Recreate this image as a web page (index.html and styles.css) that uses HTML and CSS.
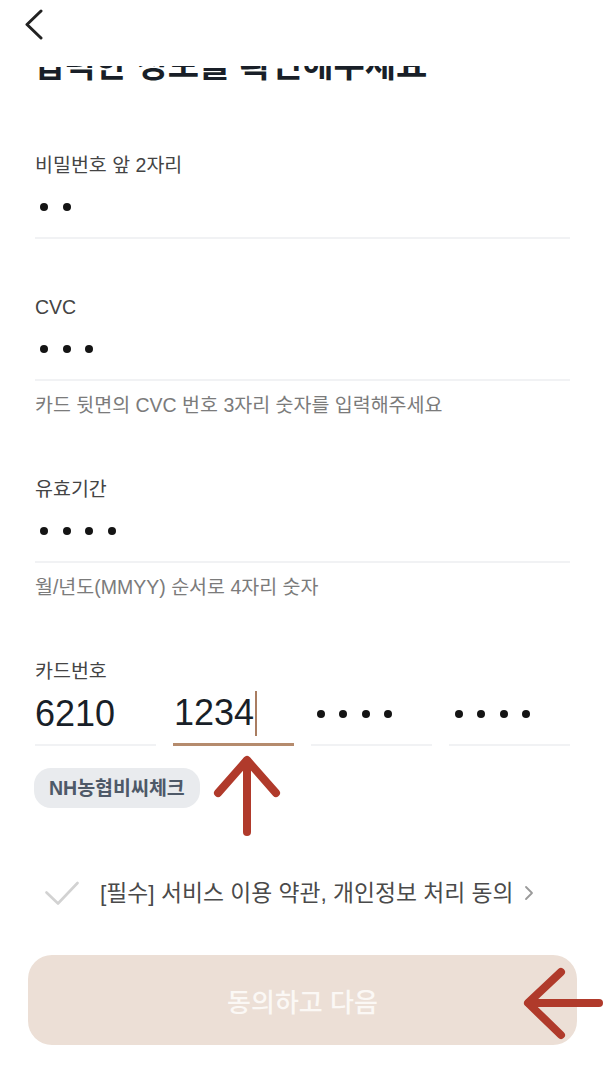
FILE: index.html
```html
<!DOCTYPE html>
<html lang="ko">
<head>
<meta charset="utf-8">
<title>카드 정보 확인</title>
<link rel="stylesheet" href="styles.css">
</head>
<body>
<div class="page">
  <header class="topbar">
    <button class="back" type="button" aria-label="뒤로">
      <svg width="20" height="32" viewBox="0 0 20 32"><polyline points="17,3 3,16.5 17,30" fill="none" stroke="#222" stroke-width="3" stroke-linecap="round" stroke-linejoin="round"/></svg>
    </button>
  </header>
  <div class="title-clip"><h1 class="title">입력한 정보를 확인해주세요</h1></div>

  <div class="form">
    <div class="field f1">
      <div class="label">비밀번호 앞 2자리</div>
      <div class="input"><span class="dots"><i></i><i></i></span></div>
    </div>

    <div class="field f2">
      <div class="label">CVC</div>
      <div class="input"><span class="dots"><i></i><i></i><i></i></span></div>
      <div class="helper">카드 뒷면의 CVC 번호 3자리 숫자를 입력해주세요</div>
    </div>

    <div class="field f3">
      <div class="label">유효기간</div>
      <div class="input"><span class="dots"><i></i><i></i><i></i><i></i></span></div>
      <div class="helper">월/년도(MMYY) 순서로 4자리 숫자</div>
    </div>

    <div class="field f4">
      <div class="label">카드번호</div>
      <div class="card-row">
        <div class="cell"><span class="num">6210</span></div>
        <div class="cell active"><span class="num">1234</span><span class="caret"></span></div>
        <div class="cell"><span class="dots card"><i></i><i></i><i></i><i></i></span></div>
        <div class="cell"><span class="dots card"><i></i><i></i><i></i><i></i></span></div>
      </div>
    </div>

    <div class="chip">NH농협비씨체크</div>

    <div class="agree">
      <svg class="check" width="34" height="26" viewBox="0 0 34 26"><polyline points="1.5,12.5 13,23.5 32.5,3" fill="none" stroke="#d2d2d2" stroke-width="2.6" stroke-linecap="round" stroke-linejoin="round"/></svg>
      <span class="agree-text">[필수] 서비스 이용 약관, 개인정보 처리 동의</span>
      <svg class="more" width="10" height="16" viewBox="0 0 10 16"><polyline points="2,2 8,8 2,14" fill="none" stroke="#9a9a9a" stroke-width="1.8" stroke-linecap="round" stroke-linejoin="round"/></svg>
    </div>
  </div>

  <div class="footer">
    <button class="next" type="button">동의하고 다음</button>
  </div>

  <svg class="mark mark-up" width="76" height="90" viewBox="0 0 76 90"><g fill="none" stroke="#b03a2b" stroke-width="8" stroke-linecap="round" stroke-linejoin="round"><polyline points="8,41 37,8 66,41"/><line x1="37" y1="9" x2="37" y2="80"/></g></svg>
  <svg class="mark mark-left" width="90" height="84" viewBox="0 0 90 84"><g fill="none" stroke="#b03a2b" stroke-width="8" stroke-linecap="round" stroke-linejoin="round"><polyline points="43,10 10,41 43,73"/><line x1="11" y1="41" x2="81" y2="41"/></g></svg>
</div>
</body>
</html>
```

FILE: styles.css
```css
* { box-sizing: border-box; }

html, body {
  margin: 0;
  padding: 0;
  background: #ffffff;
}

body {
  font-family: "Liberation Sans", "Noto Sans CJK KR", sans-serif;
  color: #191f28;
}

.page {
  position: relative;
  width: 608px;
  height: 1070px;
  overflow: hidden;
}

.topbar {
  height: 66px;
  padding: 8px 0 0 24px;
}

.back {
  display: block;
  border: 0;
  background: none;
  padding: 0;
  margin: 0;
  width: 20px;
  height: 32px;
}

.back svg { display: block; }

.title-clip {
  height: 20px;
  overflow: hidden;
  padding-left: 33px;
}

.title {
  margin: -20px 0 0 0;
  font-family: "Noto Sans CJK KR", sans-serif;
  font-size: 34px;
  line-height: 34px;
  font-weight: 700;
  color: #191f28;
  white-space: nowrap;
}

.form {
  padding: 0 38px 0 35px;
}

.field { display: flex; flex-direction: column; }
.f1 { margin-top: 67px; }
.f2 { margin-top: 56px; }
.f3 { margin-top: 62px; }
.f4 { margin-top: 62px; }

.label {
  font-size: 19.5px;
  line-height: 24px;
  height: 24px;
  color: #444444;
}

.input {
  height: 62px;
  display: flex;
  align-items: center;
  border-bottom: 2px solid #f1f2f4;
}

.dots {
  display: flex;
  gap: 14.5px;
  padding-left: 5px;
}

.dots i {
  display: block;
  width: 8px;
  height: 8px;
  border-radius: 50%;
  background: #141414;
}

.dots.card { padding-left: 6px; gap: 14.3px; }

.helper {
  margin-top: 14px;
  font-size: 19.5px;
  line-height: 20px;
  color: #7b7b7b;
}

.card-row {
  display: grid;
  grid-template-columns: repeat(4, 1fr);
  column-gap: 17px;
}

.cell {
  height: 63px;
  display: flex;
  align-items: center;
  border-bottom: 2px solid #f1f2f4;
}

.cell.active {
  border-bottom: 3px solid #b58b6d;
}

.num {
  font-size: 36px;
  line-height: 40px;
  color: #191f28;
}

.cell.active .num { margin-left: 1px; }

.caret {
  display: block;
  width: 1.5px;
  height: 45px;
  background: #a97d61;
  margin-left: 1px;
}

.chip {
  margin-top: 22px;
  align-self: flex-start;
  display: inline-block;
  height: 40px;
  padding: 0 15px;
  border-radius: 17px;
  background: #e9ebee;
  font-size: 19.5px;
  line-height: 40px;
  font-weight: 700;
  color: #4e5968;
  margin-left: -1px;
}

.agree {
  margin-top: 70px;
  height: 30px;
  display: flex;
  align-items: center;
  padding-left: 10px;
}

.check { display: block; flex: none; }

.agree-text {
  margin-left: 21px;
  font-size: 22.8px;
  line-height: 30px;
  color: #4a4a4a;
  white-space: nowrap;
}

.more { display: block; margin-left: 10px; flex: none; }

.footer {
  padding: 0 31px 0 28px;
  margin-top: 47px;
}

.next {
  display: block;
  width: 100%;
  height: 90px;
  border: 0;
  border-radius: 24px;
  background: #ecdfd6;
  color: #fbf8f5;
  font-family: "Noto Sans CJK KR", sans-serif;
  font-size: 26px;
  font-weight: 500;
}

.mark {
  position: absolute;
  display: block;
}

.mark-up { left: 210px; top: 752px; }
.mark-left { left: 518px; top: 962px; }
```
